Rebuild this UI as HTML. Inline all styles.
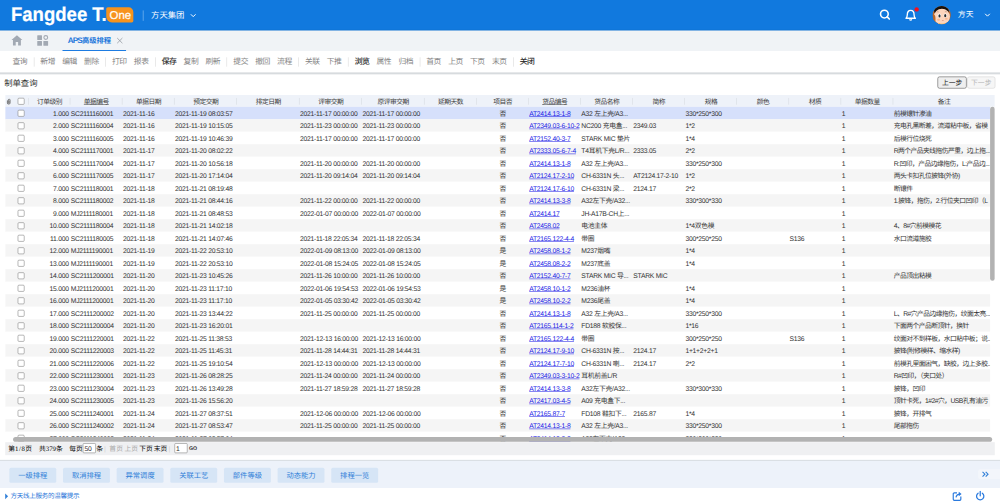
<!DOCTYPE html>
<html lang="zh-CN"><head><meta charset="utf-8"><title>APS高级排程</title>
<style>
*{box-sizing:border-box;margin:0;padding:0}
html,body{width:1000px;height:504px;overflow:hidden;background:#fff}
body{font-family:"Liberation Sans","Noto Sans CJK SC",sans-serif;font-size:12px;color:#333;text-rendering:geometricPrecision}
#app{position:absolute;left:0;top:0;width:1920px;height:968px;transform:scale(0.5208333);transform-origin:0 0;background:#fff;overflow:hidden}
.abs{position:absolute}
#hdr{position:absolute;left:0;top:0;width:1920px;height:58.500px;background:#1179de;border-bottom:2px solid #0f6fcf}
#logo{position:absolute;left:20.500px;top:7px;font-size:38px;line-height:44px;font-weight:bold;color:#fff;white-space:nowrap;transform:scaleX(.937);transform-origin:0 0;letter-spacing:0;-webkit-text-stroke:.4px #fff}
#one{position:absolute;left:204px;top:13.500px;width:52px;height:29px;background:#f7931e;border-radius:3px 9px 3px 11px;color:#fff;font-size:22px;line-height:29px;text-align:center;font-weight:normal;-webkit-text-stroke:.35px #fff;padding-left:2px}
#hsep{position:absolute;left:274px;top:20px;width:2px;height:20px;background:#5aa4ea}
#org{position:absolute;left:290px;top:19px;font-size:16px;line-height:24px;color:#fff;white-space:nowrap}
#tabs{position:absolute;left:0;top:58.500px;width:1920px;height:39.500px;background:#f0f3f6;border-top:1px solid #f6f6f2}
#tabt{position:absolute;left:130px;top:7.500px;font-size:14px;line-height:20px;font-weight:bold;color:#1b76db;white-space:nowrap}
#tabu{position:absolute;left:120px;top:36.300px;width:122px;height:2.200px;background:#1d7ce2}
#tb{position:absolute;left:0;top:98px;width:1920px;height:44px;background:#fff;border-bottom:3.500px solid #d6dadd;box-shadow:0 1px 1px rgba(200,205,210,.5);padding-left:16.500px;white-space:nowrap;font-size:15px;letter-spacing:-1px;line-height:42px;color:#858585}
#tb span{display:inline-block;padding:0 7px 0 7.500px;width:42px;vertical-align:top}
#tb i{display:inline-block;width:1px;height:18px;margin:12px 4.500px 0 6px;background:#d5d5d5;vertical-align:top}
#tb .on{color:#2b2b2b;-webkit-text-stroke:.3px #2b2b2b}
#ttl{position:absolute;left:8px;top:150px;font-size:16px;line-height:22px;color:#333}
.btn{position:absolute;top:147px;height:23px;border:1.500px solid #4a4a4a;border-radius:4px;background:#efefef;font-size:13px;line-height:22px;text-align:center;color:#111}
.btn.dis{border-color:#cfcfcf;color:#b5b5b5;background:#f6f6f6}
#grid{position:absolute;left:10px;top:182px;width:1900px;height:666px;overflow:hidden;background:#fff}
#gh{position:absolute;left:0;top:0;width:1900px;height:23px;background:#eef2f9}
#gh div{position:absolute;top:0;height:23px;line-height:26px;text-align:center;color:#3a3a3a;font-size:13px;letter-spacing:-1px;white-space:nowrap}
#gh div.u{text-decoration:underline}
#gh b{position:absolute;top:6px;width:1px;height:13px;background:#d4d8de}
.r{position:absolute;left:0;width:1890.500px;height:24px;background:#fff;overflow:hidden}
.r.e{background:#f5f5f5}
.r.s{background:#d6e0fb}
.r div{position:absolute;top:0;height:24px;line-height:25.500px;white-space:nowrap;overflow:hidden;font-size:13px;letter-spacing:-.5px;color:#333}
.r div.z{letter-spacing:-1px}
.r a{color:#1a1ae6;text-decoration:underline}
.cb{position:absolute;left:24px;width:13px;height:13px;border:1px solid #767676;border-radius:2.5px;background:#fff}
#vs{position:absolute;left:1890.500px;top:23px;width:9.500px;height:334px;border-radius:5px;background:#b2b2b2}
#hs{position:absolute;left:15px;top:657px;width:1879.500px;height:9.500px;border-radius:5px;background:#b2b2b2}
#pg{position:absolute;left:10px;top:848.500px;width:1900px;height:25px;background:#eff0f2;font-family:"Liberation Serif","Noto Sans CJK SC",serif;font-size:13px;font-weight:400;line-height:26px;color:#000}
#pg span{position:absolute;top:0;white-space:nowrap}
#pg .in{position:absolute;top:2.500px;height:19px;width:25px;border:1px solid #7a7a7a;border-radius:2px;background:#fff;font-family:"Liberation Sans",sans-serif;font-weight:400;font-size:13px;letter-spacing:-.5px;line-height:18px;padding-left:2px;color:#333}
#bb{position:absolute;left:0;top:883px;width:1920px;height:54px;background:#edf2fa;border-top:2.500px solid #d9dee3}
#bb div{position:absolute;top:12.500px;width:90px;height:29px;background:#d6e5f6;border-radius:3px;color:#2f7fd8;font-size:14px;line-height:29px;text-align:center}
#st{position:absolute;left:20px;top:943px;font-size:12.500px;letter-spacing:-.5px;line-height:20px;color:#2472d8;white-space:nowrap}
</style></head>
<body>
<div id="app">
<div id="hdr">
<div id="logo">Fangdee T.</div>
<div id="one">One</div>
<div id="hsep"></div>
<div id="org">方天集团</div>
<svg class="abs" style="left:363px;top:24px" width="16" height="12" viewBox="0 0 16 12"><path d="M3.5 3.5 L8 8 L12.5 3.5" fill="none" stroke="#fff" stroke-width="1.9"/></svg>
<svg class="abs" style="left:1684px;top:14px" width="32" height="32" viewBox="0 0 32 32"><circle cx="14" cy="13" r="7.4" fill="none" stroke="#fff" stroke-width="3"/><path d="M19.500 18.500 L23.500 22.500" stroke="#fff" stroke-width="3.2" stroke-linecap="round"/></svg>
<svg class="abs" style="left:1730px;top:8px" width="40" height="40" viewBox="0 0 40 40"><path d="M9.500 27 C11.500 25.500 12 24 12 20.500 C12 15 14.500 12 18.500 12 C22.500 12 25 15 25 20.500 C25 24 25.500 25.500 27.500 27 Z" fill="none" stroke="#fff" stroke-width="2.6" stroke-linejoin="round"/><path d="M16 29.500 Q18.500 31.500 21 29.500" fill="none" stroke="#fff" stroke-width="2.2"/><circle cx="30" cy="10" r="4.2" fill="#f5101e"/></svg>
<svg class="abs" style="left:1790px;top:10.500px" width="36" height="36" viewBox="0 0 38 38"><defs><clipPath id="av"><circle cx="19" cy="19" r="18.5"/></clipPath></defs><g clip-path="url(#av)"><rect width="38" height="38" fill="#b8672c"/><ellipse cx="18.500" cy="10" rx="15" ry="10" fill="#15100d"/><ellipse cx="19.500" cy="22.500" rx="16.300" ry="16.500" fill="#fcd5bd"/><ellipse cx="2.500" cy="27" rx="4" ry="9" fill="#b8672c"/><path d="M9 12.800 Q11 11.500 13 12.600 M25.500 12.300 Q27.500 11.200 29.500 12.500" stroke="#b98a74" stroke-width="1.300" fill="none"/><ellipse cx="14.400" cy="20.300" rx="3.600" ry="4.300" fill="#fff"/><ellipse cx="26.500" cy="20" rx="3.600" ry="4.300" fill="#fff"/><ellipse cx="14.600" cy="20.600" rx="2.200" ry="3.300" fill="#2d2d2d"/><ellipse cx="26.300" cy="20.200" rx="2.200" ry="3.300" fill="#2d2d2d"/><ellipse cx="12.800" cy="28.200" rx="3" ry="2" fill="#fbb892"/><ellipse cx="28.500" cy="26.500" rx="2.800" ry="2" fill="#fbb892"/><path d="M19 29.200 Q21.300 31.800 23.600 29.200 Z" fill="#d0705c"/><path d="M13.500 35.500 Q19.500 38 25.500 35.500 L25.500 39 L13.500 39 Z" fill="#f5a11c"/></g></svg>
<div class="abs" style="left:1839px;top:17px;font-size:15px;line-height:24px;color:#fff;white-space:nowrap">方天</div>
<svg class="abs" style="left:1888px;top:23px" width="16" height="12" viewBox="0 0 16 12"><path d="M3.5 3.5 L8 8 L12.5 3.5" fill="none" stroke="#fff" stroke-width="1.9"/></svg>
</div>
<div id="tabs">
<svg class="abs" style="left:21px;top:6.500px" width="23" height="23" viewBox="0 0 22 22"><path d="M11 1.5 L21 10.5 L18.3 10.5 L18.3 20.5 L13.2 20.5 L13.2 14 L8.8 14 L8.8 20.5 L3.7 20.5 L3.7 10.5 L1 10.5 Z" fill="#a2a9b3"/></svg>
<svg class="abs" style="left:70.500px;top:6.500px" width="23.500" height="23.500" viewBox="0 0 22 22"><rect x="0.5" y="1.5" width="8.5" height="8.5" rx="1" fill="#a2a9b3"/><rect x="0.5" y="12" width="8.5" height="8.5" rx="1" fill="#a2a9b3"/><rect x="11.5" y="12" width="8.5" height="8.5" rx="1" fill="#a2a9b3"/><circle cx="15.800" cy="5.600" r="3.400" fill="none" stroke="#a2a9b3" stroke-width="1.900"/></svg>
<div id="tabt"><span style="font-size:15.500px;letter-spacing:-1.500px">APS</span>高级排程</div>
<svg class="abs" style="left:223px;top:11.500px" width="14" height="14" viewBox="0 0 14 14"><path d="M2 2 L12 12 M12 2 L2 12" stroke="#8d939b" stroke-width="1.4" fill="none"/></svg>
<div id="tabu"></div>
</div>
<div id="tb"><span>查询</span><i></i><span>新增</span><span>编辑</span><span>删除</span><i></i><span>打印</span><span>报表</span><i></i><span class="on">保存</span><span>复制</span><span>刷新</span><i></i><span>提交</span><span>撤回</span><span>流程</span><i></i><span>关联</span><span>下推</span><i></i><span class="on">浏览</span><span>属性</span><span>归档</span><i></i><span>首页</span><span>上页</span><span>下页</span><span>末页</span><i></i><span class="on">关闭</span></div>
<div id="ttl">制单查询</div>
<div class="btn" style="left:1800px;width:56px">上一步</div><div class="btn dis" style="left:1857px;width:54px">下一步</div>
<div id="grid">
<div id="gh"><svg class="abs" style="left:2px;top:7px" width="9.500" height="12" viewBox="0 0 11 14"><path d="M2.5 4.500 L2.5 10 A3 3 0 0 0 8.500 10 L8.500 3.500 A2 2 0 0 0 4.500 3.500 L4.500 9.800 A1 1 0 0 0 6.500 9.800 L6.500 5" fill="none" stroke="#6a6a6a" stroke-width="2"/></svg><span class="cb" style="left:24px;top:6px"></span><b style="left:44px"></b><div style="left:45px;width:80px">订单级别</div><b style="left:124px"></b><div class="u" style="left:125px;width:100px">单据编号</div><b style="left:224px"></b><div style="left:225px;width:100px">单据日期</div><b style="left:324px"></b><div style="left:325px;width:120px">预定交期</div><b style="left:444px"></b><div style="left:445px;width:120px">排定日期</div><b style="left:564px"></b><div style="left:565px;width:120px">评审交期</div><b style="left:684px"></b><div style="left:685px;width:120px">原评审交期</div><b style="left:804px"></b><div style="left:805px;width:100px">延期天数</div><b style="left:904px"></b><div style="left:905px;width:100px">项目否</div><b style="left:1004px"></b><div class="u" style="left:1005px;width:100px">货品编号</div><b style="left:1104px"></b><div style="left:1105px;width:100px">货品名称</div><b style="left:1204px"></b><div style="left:1205px;width:100px">简称</div><b style="left:1304px"></b><div style="left:1305px;width:100px">规格</div><b style="left:1404px"></b><div style="left:1405px;width:100px">颜色</div><b style="left:1504px"></b><div style="left:1505px;width:100px">材质</div><b style="left:1604px"></b><div style="left:1605px;width:100px">单据数量</div><b style="left:1704px"></b><div style="left:1705px;width:195px">备注</div></div>
<div class="r s" style="top:23px"><span class="cb" style="top:6px"></span><div style="left:45px;width:80px;text-align:right;padding-right:3px">1.000</div><div style="left:125px;width:100px;padding-left:1px">SC2111160001</div><div style="left:225px;width:100px;padding-left:1px">2021-11-16</div><div style="left:325px;width:120px;padding-left:1px">2021-11-19 08:03:57</div><div style="left:565px;width:120px;padding-left:1px">2021-11-17 00:00:00</div><div style="left:685px;width:120px;padding-left:1px">2021-11-17 00:00:00</div><div class="z" style="left:905px;width:100px;text-align:center">否</div><div style="left:1005px;width:100px;padding-left:1px;overflow:visible"><a>AT2414.13-1-8</a></div><div style="left:1105px;width:100px;padding-left:1px">A32 左上壳/A3...</div><div style="left:1305px;width:100px;padding-left:1px">330*250*300</div><div style="left:1605px;width:100px;padding-left:1px">1</div><div class="z" style="left:1705px;width:195px;padding-left:1px">前模镶针渗油</div></div>
<div class="r e" style="top:47px"><span class="cb" style="top:6px"></span><div style="left:45px;width:80px;text-align:right;padding-right:3px">2.000</div><div style="left:125px;width:100px;padding-left:1px">SC2111160004</div><div style="left:225px;width:100px;padding-left:1px">2021-11-16</div><div style="left:325px;width:120px;padding-left:1px">2021-11-19 10:15:05</div><div style="left:565px;width:120px;padding-left:1px">2021-11-23 00:00:00</div><div style="left:685px;width:120px;padding-left:1px">2021-11-23 00:00:00</div><div class="z" style="left:905px;width:100px;text-align:center">否</div><div style="left:1005px;width:100px;padding-left:1px;overflow:visible"><a>AT2349.03-6-10-2</a></div><div style="left:1105px;width:100px;padding-left:1px">NC200 充电盒...</div><div style="left:1205px;width:100px;padding-left:1px">2349.03</div><div style="left:1305px;width:100px;padding-left:1px">1*2</div><div style="left:1605px;width:100px;padding-left:1px">1</div><div class="z" style="left:1705px;width:195px;padding-left:1px">充电孔黑断差，流道粘中板，省模</div></div>
<div class="r" style="top:71px"><span class="cb" style="top:6px"></span><div style="left:45px;width:80px;text-align:right;padding-right:3px">3.000</div><div style="left:125px;width:100px;padding-left:1px">SC2111160005</div><div style="left:225px;width:100px;padding-left:1px">2021-11-16</div><div style="left:325px;width:120px;padding-left:1px">2021-11-19 10:46:39</div><div style="left:565px;width:120px;padding-left:1px">2021-11-17 00:00:00</div><div style="left:685px;width:120px;padding-left:1px">2021-11-17 00:00:00</div><div class="z" style="left:905px;width:100px;text-align:center">否</div><div style="left:1005px;width:100px;padding-left:1px;overflow:visible"><a>AT2152.40-3-7</a></div><div style="left:1105px;width:100px;padding-left:1px">STARK MIC 垫片</div><div style="left:1305px;width:100px;padding-left:1px">1*4</div><div style="left:1605px;width:100px;padding-left:1px">1</div><div class="z" style="left:1705px;width:195px;padding-left:1px">后模行位烧死</div></div>
<div class="r e" style="top:95px"><span class="cb" style="top:6px"></span><div style="left:45px;width:80px;text-align:right;padding-right:3px">4.000</div><div style="left:125px;width:100px;padding-left:1px">SC2111170001</div><div style="left:225px;width:100px;padding-left:1px">2021-11-17</div><div style="left:325px;width:120px;padding-left:1px">2021-11-20 08:02:22</div><div class="z" style="left:905px;width:100px;text-align:center">否</div><div style="left:1005px;width:100px;padding-left:1px;overflow:visible"><a>AT2333.05-6-7-4</a></div><div style="left:1105px;width:100px;padding-left:1px">T4耳机下壳L/R...</div><div style="left:1205px;width:100px;padding-left:1px">2333.05</div><div style="left:1305px;width:100px;padding-left:1px">2*2</div><div style="left:1605px;width:100px;padding-left:1px">1</div><div class="z" style="left:1705px;width:195px;padding-left:1px">R两个产品夹线拖伤严重，边上拖...</div></div>
<div class="r" style="top:119px"><span class="cb" style="top:6px"></span><div style="left:45px;width:80px;text-align:right;padding-right:3px">5.000</div><div style="left:125px;width:100px;padding-left:1px">SC2111170004</div><div style="left:225px;width:100px;padding-left:1px">2021-11-17</div><div style="left:325px;width:120px;padding-left:1px">2021-11-20 10:56:18</div><div style="left:565px;width:120px;padding-left:1px">2021-11-20 00:00:00</div><div style="left:685px;width:120px;padding-left:1px">2021-11-20 00:00:00</div><div class="z" style="left:905px;width:100px;text-align:center">否</div><div style="left:1005px;width:100px;padding-left:1px;overflow:visible"><a>AT2414.13-1-8</a></div><div style="left:1105px;width:100px;padding-left:1px">A32 左上壳/A3...</div><div style="left:1305px;width:100px;padding-left:1px">330*250*300</div><div style="left:1605px;width:100px;padding-left:1px">1</div><div class="z" style="left:1705px;width:195px;padding-left:1px">R:凹印，产品边缘拖伤，L:产品边...</div></div>
<div class="r e" style="top:143px"><span class="cb" style="top:6px"></span><div style="left:45px;width:80px;text-align:right;padding-right:3px">6.000</div><div style="left:125px;width:100px;padding-left:1px">SC2111170005</div><div style="left:225px;width:100px;padding-left:1px">2021-11-17</div><div style="left:325px;width:120px;padding-left:1px">2021-11-20 17:14:04</div><div style="left:565px;width:120px;padding-left:1px">2021-11-20 09:14:04</div><div style="left:685px;width:120px;padding-left:1px">2021-11-20 09:14:04</div><div class="z" style="left:905px;width:100px;text-align:center">否</div><div style="left:1005px;width:100px;padding-left:1px;overflow:visible"><a>AT2124.17-2-10</a></div><div style="left:1105px;width:100px;padding-left:1px">CH-6331N 头...</div><div style="left:1205px;width:100px;padding-left:1px">AT2124.17-2-10</div><div style="left:1305px;width:100px;padding-left:1px">1*2</div><div style="left:1605px;width:100px;padding-left:1px">1</div><div class="z" style="left:1705px;width:195px;padding-left:1px">两头卡扣孔位披锋(外协)</div></div>
<div class="r" style="top:167px"><span class="cb" style="top:6px"></span><div style="left:45px;width:80px;text-align:right;padding-right:3px">7.000</div><div style="left:125px;width:100px;padding-left:1px">SC2111180001</div><div style="left:225px;width:100px;padding-left:1px">2021-11-18</div><div style="left:325px;width:120px;padding-left:1px">2021-11-21 08:19:48</div><div class="z" style="left:905px;width:100px;text-align:center">否</div><div style="left:1005px;width:100px;padding-left:1px;overflow:visible"><a>AT2124.17-6-10</a></div><div style="left:1105px;width:100px;padding-left:1px">CH-6331N 梁...</div><div style="left:1205px;width:100px;padding-left:1px">2124.17</div><div style="left:1305px;width:100px;padding-left:1px">2*2</div><div style="left:1605px;width:100px;padding-left:1px">1</div><div class="z" style="left:1705px;width:195px;padding-left:1px">断镶件</div></div>
<div class="r e" style="top:191px"><span class="cb" style="top:6px"></span><div style="left:45px;width:80px;text-align:right;padding-right:3px">8.000</div><div style="left:125px;width:100px;padding-left:1px">SC2111180002</div><div style="left:225px;width:100px;padding-left:1px">2021-11-18</div><div style="left:325px;width:120px;padding-left:1px">2021-11-21 08:44:16</div><div style="left:565px;width:120px;padding-left:1px">2021-11-22 00:00:00</div><div style="left:685px;width:120px;padding-left:1px">2021-11-22 00:00:00</div><div class="z" style="left:905px;width:100px;text-align:center">否</div><div style="left:1005px;width:100px;padding-left:1px;overflow:visible"><a>AT2414.13-3-8</a></div><div style="left:1105px;width:100px;padding-left:1px">A32左下壳/A32...</div><div style="left:1305px;width:100px;padding-left:1px">330*300*330</div><div style="left:1605px;width:100px;padding-left:1px">1</div><div class="z" style="left:1705px;width:195px;padding-left:1px">1.披锋，拖伤，2.行位夹口凹印（L</div></div>
<div class="r" style="top:215px"><span class="cb" style="top:6px"></span><div style="left:45px;width:80px;text-align:right;padding-right:3px">9.000</div><div style="left:125px;width:100px;padding-left:1px">MJ2111180001</div><div style="left:225px;width:100px;padding-left:1px">2021-11-18</div><div style="left:325px;width:120px;padding-left:1px">2021-11-21 08:48:53</div><div style="left:565px;width:120px;padding-left:1px">2022-01-07 00:00:00</div><div style="left:685px;width:120px;padding-left:1px">2022-01-07 00:00:00</div><div class="z" style="left:905px;width:100px;text-align:center">否</div><div style="left:1005px;width:100px;padding-left:1px;overflow:visible"><a>AT2414.17</a></div><div style="left:1105px;width:100px;padding-left:1px">JH-A17B-CH上...</div><div style="left:1605px;width:100px;padding-left:1px">1</div></div>
<div class="r e" style="top:239px"><span class="cb" style="top:6px"></span><div style="left:45px;width:80px;text-align:right;padding-right:3px">10.000</div><div style="left:125px;width:100px;padding-left:1px">SC2111180004</div><div style="left:225px;width:100px;padding-left:1px">2021-11-18</div><div style="left:325px;width:120px;padding-left:1px">2021-11-21 14:02:18</div><div class="z" style="left:905px;width:100px;text-align:center">否</div><div style="left:1005px;width:100px;padding-left:1px;overflow:visible"><a>AT2458.02</a></div><div style="left:1105px;width:100px;padding-left:1px">电池主体</div><div style="left:1305px;width:100px;padding-left:1px">1*4双色模</div><div style="left:1605px;width:100px;padding-left:1px">1</div><div class="z" style="left:1705px;width:195px;padding-left:1px">4、8#穴前模模花</div></div>
<div class="r" style="top:263px"><span class="cb" style="top:6px"></span><div style="left:45px;width:80px;text-align:right;padding-right:3px">11.000</div><div style="left:125px;width:100px;padding-left:1px">SC2111180005</div><div style="left:225px;width:100px;padding-left:1px">2021-11-18</div><div style="left:325px;width:120px;padding-left:1px">2021-11-21 14:07:46</div><div style="left:565px;width:120px;padding-left:1px">2021-11-18 22:05:34</div><div style="left:685px;width:120px;padding-left:1px">2021-11-18 22:05:34</div><div class="z" style="left:905px;width:100px;text-align:center">否</div><div style="left:1005px;width:100px;padding-left:1px;overflow:visible"><a>AT2165.122-4-4</a></div><div style="left:1105px;width:100px;padding-left:1px">带圈</div><div style="left:1305px;width:100px;padding-left:1px">300*250*250</div><div style="left:1505px;width:100px;padding-left:1px">S136</div><div style="left:1605px;width:100px;padding-left:1px">1</div><div class="z" style="left:1705px;width:195px;padding-left:1px">水口流道施胶</div></div>
<div class="r e" style="top:287px"><span class="cb" style="top:6px"></span><div style="left:45px;width:80px;text-align:right;padding-right:3px">12.000</div><div style="left:125px;width:100px;padding-left:1px">MJ2111190001</div><div style="left:225px;width:100px;padding-left:1px">2021-11-19</div><div style="left:325px;width:120px;padding-left:1px">2021-11-22 20:53:10</div><div style="left:565px;width:120px;padding-left:1px">2022-01-09 08:13:00</div><div style="left:685px;width:120px;padding-left:1px">2022-01-09 08:13:00</div><div class="z" style="left:905px;width:100px;text-align:center">是</div><div style="left:1005px;width:100px;padding-left:1px;overflow:visible"><a>AT2458.08-1-2</a></div><div style="left:1105px;width:100px;padding-left:1px">M237烟嘴</div><div style="left:1305px;width:100px;padding-left:1px">1*4</div><div style="left:1605px;width:100px;padding-left:1px">1</div></div>
<div class="r" style="top:311px"><span class="cb" style="top:6px"></span><div style="left:45px;width:80px;text-align:right;padding-right:3px">13.000</div><div style="left:125px;width:100px;padding-left:1px">MJ2111190001</div><div style="left:225px;width:100px;padding-left:1px">2021-11-19</div><div style="left:325px;width:120px;padding-left:1px">2021-11-22 20:53:10</div><div style="left:565px;width:120px;padding-left:1px">2022-01-08 15:24:05</div><div style="left:685px;width:120px;padding-left:1px">2022-01-08 15:24:05</div><div class="z" style="left:905px;width:100px;text-align:center">是</div><div style="left:1005px;width:100px;padding-left:1px;overflow:visible"><a>AT2458.08-2-2</a></div><div style="left:1105px;width:100px;padding-left:1px">M237底盖</div><div style="left:1305px;width:100px;padding-left:1px">1*4</div><div style="left:1605px;width:100px;padding-left:1px">1</div></div>
<div class="r e" style="top:335px"><span class="cb" style="top:6px"></span><div style="left:45px;width:80px;text-align:right;padding-right:3px">14.000</div><div style="left:125px;width:100px;padding-left:1px">SC2111200001</div><div style="left:225px;width:100px;padding-left:1px">2021-11-20</div><div style="left:325px;width:120px;padding-left:1px">2021-11-23 10:45:26</div><div style="left:565px;width:120px;padding-left:1px">2021-11-26 10:00:00</div><div style="left:685px;width:120px;padding-left:1px">2021-11-26 10:00:00</div><div class="z" style="left:905px;width:100px;text-align:center">否</div><div style="left:1005px;width:100px;padding-left:1px;overflow:visible"><a>AT2152.40-7-7</a></div><div style="left:1105px;width:100px;padding-left:1px">STARK MIC 导...</div><div style="left:1205px;width:100px;padding-left:1px">STARK MIC</div><div style="left:1605px;width:100px;padding-left:1px">1</div><div class="z" style="left:1705px;width:195px;padding-left:1px">产品顶出粘模</div></div>
<div class="r" style="top:359px"><span class="cb" style="top:6px"></span><div style="left:45px;width:80px;text-align:right;padding-right:3px">15.000</div><div style="left:125px;width:100px;padding-left:1px">MJ2111200001</div><div style="left:225px;width:100px;padding-left:1px">2021-11-20</div><div style="left:325px;width:120px;padding-left:1px">2021-11-23 11:17:10</div><div style="left:565px;width:120px;padding-left:1px">2022-01-06 19:54:53</div><div style="left:685px;width:120px;padding-left:1px">2022-01-06 19:54:53</div><div class="z" style="left:905px;width:100px;text-align:center">是</div><div style="left:1005px;width:100px;padding-left:1px;overflow:visible"><a>AT2458.10-1-2</a></div><div style="left:1105px;width:100px;padding-left:1px">M236油杯</div><div style="left:1305px;width:100px;padding-left:1px">1*4</div><div style="left:1605px;width:100px;padding-left:1px">1</div></div>
<div class="r e" style="top:383px"><span class="cb" style="top:6px"></span><div style="left:45px;width:80px;text-align:right;padding-right:3px">16.000</div><div style="left:125px;width:100px;padding-left:1px">MJ2111200001</div><div style="left:225px;width:100px;padding-left:1px">2021-11-20</div><div style="left:325px;width:120px;padding-left:1px">2021-11-23 11:17:10</div><div style="left:565px;width:120px;padding-left:1px">2022-01-05 03:30:42</div><div style="left:685px;width:120px;padding-left:1px">2022-01-05 03:30:42</div><div class="z" style="left:905px;width:100px;text-align:center">是</div><div style="left:1005px;width:100px;padding-left:1px;overflow:visible"><a>AT2458.10-2-2</a></div><div style="left:1105px;width:100px;padding-left:1px">M236尾盖</div><div style="left:1305px;width:100px;padding-left:1px">1*4</div><div style="left:1605px;width:100px;padding-left:1px">1</div></div>
<div class="r" style="top:407px"><span class="cb" style="top:6px"></span><div style="left:45px;width:80px;text-align:right;padding-right:3px">17.000</div><div style="left:125px;width:100px;padding-left:1px">SC2111200002</div><div style="left:225px;width:100px;padding-left:1px">2021-11-20</div><div style="left:325px;width:120px;padding-left:1px">2021-11-23 13:44:22</div><div style="left:565px;width:120px;padding-left:1px">2021-11-25 00:00:00</div><div style="left:685px;width:120px;padding-left:1px">2021-11-25 00:00:00</div><div class="z" style="left:905px;width:100px;text-align:center">否</div><div style="left:1005px;width:100px;padding-left:1px;overflow:visible"><a>AT2414.13-1-8</a></div><div style="left:1105px;width:100px;padding-left:1px">A32 左上壳/A3...</div><div style="left:1305px;width:100px;padding-left:1px">330*250*300</div><div style="left:1605px;width:100px;padding-left:1px">1</div><div class="z" style="left:1705px;width:195px;padding-left:1px">L、R#穴产品边缘拖伤，纹面太亮...</div></div>
<div class="r e" style="top:431px"><span class="cb" style="top:6px"></span><div style="left:45px;width:80px;text-align:right;padding-right:3px">18.000</div><div style="left:125px;width:100px;padding-left:1px">SC2111200004</div><div style="left:225px;width:100px;padding-left:1px">2021-11-20</div><div style="left:325px;width:120px;padding-left:1px">2021-11-23 16:20:01</div><div class="z" style="left:905px;width:100px;text-align:center">否</div><div style="left:1005px;width:100px;padding-left:1px;overflow:visible"><a>AT2165.114-1-2</a></div><div style="left:1105px;width:100px;padding-left:1px">FD188 软胶保...</div><div style="left:1305px;width:100px;padding-left:1px">1*16</div><div style="left:1605px;width:100px;padding-left:1px">1</div><div class="z" style="left:1705px;width:195px;padding-left:1px">下面两个产品断顶针，换针</div></div>
<div class="r" style="top:455px"><span class="cb" style="top:6px"></span><div style="left:45px;width:80px;text-align:right;padding-right:3px">19.000</div><div style="left:125px;width:100px;padding-left:1px">SC2111220001</div><div style="left:225px;width:100px;padding-left:1px">2021-11-22</div><div style="left:325px;width:120px;padding-left:1px">2021-11-25 11:38:53</div><div style="left:565px;width:120px;padding-left:1px">2021-12-13 16:00:00</div><div style="left:685px;width:120px;padding-left:1px">2021-12-13 16:00:00</div><div class="z" style="left:905px;width:100px;text-align:center">否</div><div style="left:1005px;width:100px;padding-left:1px;overflow:visible"><a>AT2165.122-4-4</a></div><div style="left:1105px;width:100px;padding-left:1px">带圈</div><div style="left:1305px;width:100px;padding-left:1px">300*250*250</div><div style="left:1505px;width:100px;padding-left:1px">S136</div><div style="left:1605px;width:100px;padding-left:1px">1</div><div class="z" style="left:1705px;width:195px;padding-left:1px">纹面对不到样板，水口粘中板；说...</div></div>
<div class="r e" style="top:479px"><span class="cb" style="top:6px"></span><div style="left:45px;width:80px;text-align:right;padding-right:3px">20.000</div><div style="left:125px;width:100px;padding-left:1px">SC2111220003</div><div style="left:225px;width:100px;padding-left:1px">2021-11-22</div><div style="left:325px;width:120px;padding-left:1px">2021-11-25 11:45:31</div><div style="left:565px;width:120px;padding-left:1px">2021-11-28 14:44:31</div><div style="left:685px;width:120px;padding-left:1px">2021-11-28 14:44:31</div><div class="z" style="left:905px;width:100px;text-align:center">否</div><div style="left:1005px;width:100px;padding-left:1px;overflow:visible"><a>AT2124.17-9-10</a></div><div style="left:1105px;width:100px;padding-left:1px">CH-6331N 按...</div><div style="left:1205px;width:100px;padding-left:1px">2124.17</div><div style="left:1305px;width:100px;padding-left:1px">1+1+2+2+1</div><div style="left:1605px;width:100px;padding-left:1px">1</div><div class="z" style="left:1705px;width:195px;padding-left:1px">披锋(附修模样、缩水样)</div></div>
<div class="r" style="top:503px"><span class="cb" style="top:6px"></span><div style="left:45px;width:80px;text-align:right;padding-right:3px">21.000</div><div style="left:125px;width:100px;padding-left:1px">SC2111220006</div><div style="left:225px;width:100px;padding-left:1px">2021-11-22</div><div style="left:325px;width:120px;padding-left:1px">2021-11-25 19:10:54</div><div style="left:565px;width:120px;padding-left:1px">2021-12-13 00:00:00</div><div style="left:685px;width:120px;padding-left:1px">2021-12-13 00:00:00</div><div class="z" style="left:905px;width:100px;text-align:center">否</div><div style="left:1005px;width:100px;padding-left:1px;overflow:visible"><a>AT2124.17-7-10</a></div><div style="left:1105px;width:100px;padding-left:1px">CH-6331N 喇...</div><div style="left:1205px;width:100px;padding-left:1px">2124.17</div><div style="left:1305px;width:100px;padding-left:1px">2*2</div><div style="left:1605px;width:100px;padding-left:1px">1</div><div class="z" style="left:1705px;width:195px;padding-left:1px">前模孔里面困气，缺胶，边上多胶...</div></div>
<div class="r e" style="top:527px"><span class="cb" style="top:6px"></span><div style="left:45px;width:80px;text-align:right;padding-right:3px">22.000</div><div style="left:125px;width:100px;padding-left:1px">SC2111230001</div><div style="left:225px;width:100px;padding-left:1px">2021-11-23</div><div style="left:325px;width:120px;padding-left:1px">2021-11-26 08:28:25</div><div style="left:565px;width:120px;padding-left:1px">2021-11-24 00:00:00</div><div style="left:685px;width:120px;padding-left:1px">2021-11-24 00:00:00</div><div class="z" style="left:905px;width:100px;text-align:center">否</div><div style="left:1005px;width:100px;padding-left:1px;overflow:visible"><a>AT2349.03-3-10-2</a></div><div style="left:1105px;width:100px;padding-left:1px">耳机前盖L/R</div><div style="left:1605px;width:100px;padding-left:1px">1</div><div class="z" style="left:1705px;width:195px;padding-left:1px">R#凹印，（夹口处）</div></div>
<div class="r" style="top:551px"><span class="cb" style="top:6px"></span><div style="left:45px;width:80px;text-align:right;padding-right:3px">23.000</div><div style="left:125px;width:100px;padding-left:1px">SC2111230004</div><div style="left:225px;width:100px;padding-left:1px">2021-11-23</div><div style="left:325px;width:120px;padding-left:1px">2021-11-26 13:49:28</div><div style="left:565px;width:120px;padding-left:1px">2021-11-27 18:59:28</div><div style="left:685px;width:120px;padding-left:1px">2021-11-27 18:59:28</div><div class="z" style="left:905px;width:100px;text-align:center">否</div><div style="left:1005px;width:100px;padding-left:1px;overflow:visible"><a>AT2414.13-3-8</a></div><div style="left:1105px;width:100px;padding-left:1px">A32左下壳/A32...</div><div style="left:1305px;width:100px;padding-left:1px">330*300*330</div><div style="left:1605px;width:100px;padding-left:1px">1</div><div class="z" style="left:1705px;width:195px;padding-left:1px">披锋，凹印</div></div>
<div class="r e" style="top:575px"><span class="cb" style="top:6px"></span><div style="left:45px;width:80px;text-align:right;padding-right:3px">24.000</div><div style="left:125px;width:100px;padding-left:1px">SC2111230005</div><div style="left:225px;width:100px;padding-left:1px">2021-11-23</div><div style="left:325px;width:120px;padding-left:1px">2021-11-26 15:56:20</div><div class="z" style="left:905px;width:100px;text-align:center">否</div><div style="left:1005px;width:100px;padding-left:1px;overflow:visible"><a>AT2417.03-4-5</a></div><div style="left:1105px;width:100px;padding-left:1px">A09 充电盒下...</div><div style="left:1605px;width:100px;padding-left:1px">1</div><div class="z" style="left:1705px;width:195px;padding-left:1px">顶针卡死，1#2#穴，USB孔有油污</div></div>
<div class="r" style="top:599px"><span class="cb" style="top:6px"></span><div style="left:45px;width:80px;text-align:right;padding-right:3px">25.000</div><div style="left:125px;width:100px;padding-left:1px">SC2111240001</div><div style="left:225px;width:100px;padding-left:1px">2021-11-24</div><div style="left:325px;width:120px;padding-left:1px">2021-11-27 08:37:51</div><div style="left:565px;width:120px;padding-left:1px">2021-12-06 00:00:00</div><div style="left:685px;width:120px;padding-left:1px">2021-12-06 00:00:00</div><div class="z" style="left:905px;width:100px;text-align:center">否</div><div style="left:1005px;width:100px;padding-left:1px;overflow:visible"><a>AT2165.87-7</a></div><div style="left:1105px;width:100px;padding-left:1px">FD108 鞋扣下...</div><div style="left:1205px;width:100px;padding-left:1px">2165.87</div><div style="left:1305px;width:100px;padding-left:1px">1*4</div><div style="left:1605px;width:100px;padding-left:1px">1</div><div class="z" style="left:1705px;width:195px;padding-left:1px">披锋，开排气</div></div>
<div class="r e" style="top:623px"><span class="cb" style="top:6px"></span><div style="left:45px;width:80px;text-align:right;padding-right:3px">26.000</div><div style="left:125px;width:100px;padding-left:1px">SC2111240002</div><div style="left:225px;width:100px;padding-left:1px">2021-11-24</div><div style="left:325px;width:120px;padding-left:1px">2021-11-27 08:53:47</div><div style="left:565px;width:120px;padding-left:1px">2021-11-25 00:00:00</div><div style="left:685px;width:120px;padding-left:1px">2021-11-25 00:00:00</div><div class="z" style="left:905px;width:100px;text-align:center">否</div><div style="left:1005px;width:100px;padding-left:1px;overflow:visible"><a>AT2414.13-1-8</a></div><div style="left:1105px;width:100px;padding-left:1px">A32 左上壳/A3...</div><div style="left:1305px;width:100px;padding-left:1px">330*250*300</div><div style="left:1605px;width:100px;padding-left:1px">1</div><div class="z" style="left:1705px;width:195px;padding-left:1px">尾部拖伤</div></div>
<div class="r" style="top:647px"><span class="cb" style="top:6px"></span><div style="left:45px;width:80px;text-align:right;padding-right:3px">27.000</div><div style="left:125px;width:100px;padding-left:1px">SC2111240003</div><div style="left:225px;width:100px;padding-left:1px">2021-11-24</div><div style="left:325px;width:120px;padding-left:1px">2021-11-27 08:57:04</div><div class="z" style="left:905px;width:100px;text-align:center">否</div><div style="left:1005px;width:100px;padding-left:1px;overflow:visible"><a>AT2414.13-3-8</a></div><div style="left:1105px;width:100px;padding-left:1px">A32左下壳/A32...</div><div style="left:1305px;width:100px;padding-left:1px">330*300*330</div><div style="left:1605px;width:100px;padding-left:1px">1</div></div>
<div id="vs"></div><div id="hs"></div>
</div>
<div id="pg">
<span style="left:6px">第<span style="position:static;letter-spacing:1px">1/8</span>页</span><span style="left:65px">共379条</span><span style="left:123px">每页</span><div class="in" style="left:149px">50</div><span style="left:175px">条</span>
<span style="left:190px;color:#bbb;font-weight:400">|</span><span style="left:200px;color:#a8a8a8;font-weight:400">首页</span><span style="left:229px;color:#a8a8a8;font-weight:400">上页</span><span style="left:257.500px">下页</span><span style="left:285px">末页</span><span style="left:314px;color:#bbb;font-weight:400">|</span>
<div class="in" style="left:325px">1</div><span style="left:353px;font-size:10px;font-family:'Liberation Sans',sans-serif;font-weight:bold;color:#333">GO</span>
</div>
<div id="bb"><div style="left:18px">一级排程</div><div style="left:121px">取消排程</div><div style="left:224px">异常调度</div><div style="left:327px">关联工艺</div><div style="left:430px">部件等级</div><div style="left:533px">动态能力</div><div style="left:636px">排程一览</div><p class="abs" style="left:1878px;top:16px;width:42px;height:19px;background:#f3f6fb;border-radius:4px 0 0 4px"></p><svg class="abs" style="left:1884px;top:19px" width="16" height="14" viewBox="0 0 16 14"><path d="M2.500 2 L7 6.500 L2.500 11 M8.500 2 L13 6.500 L8.500 11" fill="none" stroke="#2f7fd8" stroke-width="2.100"/></svg></div>
<div id="st">方天线上服务的温馨提示</div>
<svg class="abs" style="left:9px;top:946px" width="8" height="14" viewBox="0 0 8 14"><path d="M1 1.5 L6.5 7 L1 12.5 Z" fill="#2f7fd8"/></svg>
<svg class="abs" style="left:1828px;top:943px" width="20" height="20" viewBox="0 0 20 20"><path d="M9.500 3.200 H4.200 A2 2 0 0 0 2.200 5.200 V15.800 A2 2 0 0 0 4.200 17.800 H14.800 A2 2 0 0 0 16.800 15.800 V10.500" fill="none" stroke="#2a7ade" stroke-width="2.300"/><path d="M7.500 12 C8 8 11 5.800 15.500 5.600" fill="none" stroke="#2a7ade" stroke-width="2.300"/><path d="M12.800 1.200 L18.200 5.500 L12.800 9.600 Z" fill="#2a7ade"/></svg>
<svg class="abs" style="left:1872px;top:942px" width="20" height="20" viewBox="0 0 20 20"><path d="M6 5 A7 7 0 1 0 14 5" fill="none" stroke="#2a7ade" stroke-width="2.400" stroke-linecap="round"/><path d="M10 1.500 V10" stroke="#2a7ade" stroke-width="2.400" stroke-linecap="round"/></svg>
</div>
</body></html>
